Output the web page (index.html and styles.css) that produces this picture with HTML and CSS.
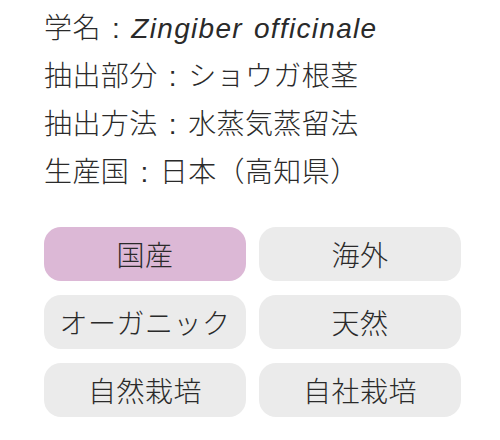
FILE: index.html
```html
<!DOCTYPE html>
<html lang="ja">
<head>
    <meta charset="utf-8">
    <title>精油データ</title>
    <link rel="stylesheet" href="styles.css">
</head>
<body>
    <div class="info">
        <p>学名 : <i>Zingiber officinale</i></p>
        <p>抽出部分 : ショウガ根茎</p>
        <p>抽出方法 : 水蒸気蒸留法</p>
        <p>生産国 : 日本（高知県）</p>
    </div>
    <div class="tags">
        <span class="tag active">国産</span>
        <span class="tag">海外</span>
        <span class="tag">オーガニック</span>
        <span class="tag">天然</span>
        <span class="tag">自然栽培</span>
        <span class="tag">自社栽培</span>
    </div>
</body>
</html>
```
FILE: styles.css
```css
body {
    margin: 0;
    padding: 5px 0 0 44px;
    background: #fff;
    color: #2a2a2a;
    font-family: "Liberation Sans", "Noto Sans CJK JP", sans-serif;
}

/* 基本情報 */
.info p {
    margin: 0;
    font-size: 28px;
    line-height: 48px;
    font-weight: 300;
    letter-spacing: 0.4px;
    word-spacing: 3px;
}

.info i {
    font-style: italic;
    letter-spacing: 1.3px;
    word-spacing: 2px;
}

/* タグ */
.tags {
    display: grid;
    grid-template-columns: 202px 202px;
    column-gap: 13px;
    row-gap: 14px;
    margin-top: 30px;
}

.tag {
    height: 54px;
    line-height: 54px;
    border-radius: 17px;
    background: #ebebeb;
    text-align: center;
    font-size: 28px;
    font-weight: 300;
    font-family: "Noto Sans CJK JP", sans-serif;
    letter-spacing: 0.5px;
}

.tag.active {
    background: #dcb8d6;
}
```
